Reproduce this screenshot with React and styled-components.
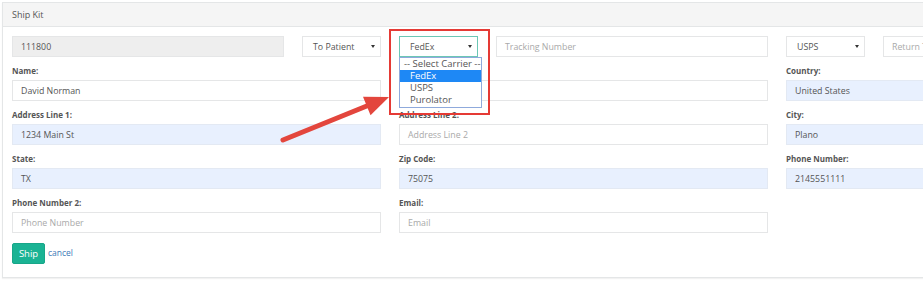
import React from "react";
import styled, { createGlobalStyle } from "styled-components";

const Global = createGlobalStyle`
  html, body { margin: 0; padding: 0; background: #fff; overflow: hidden; }
  body { font-family: "Open Sans", "Noto Sans", Arial, sans-serif; color: #676a6c; }
  * { box-sizing: border-box; }
`;

const Page = styled.div`
  position: relative;
  width: 923px;
  height: 286px;
  padding: 2px 0 0 2px;
  overflow: hidden;
`;

const Panel = styled.div`
  width: 1200px;
  border: 1px solid #e4e6e7;
  background: #fff;
  box-shadow: 0 1px 1px rgba(0,0,0,0.05);
`;

const Header = styled.div`
  height: 24px;
  background: #f5f5f5;
  border-bottom: 1px solid #e4e6e7;
  padding: 0 9px;
  display: flex;
  align-items: center;
  font-size: 9px;
  color: #555;
`;

const Body = styled.div`
  padding: 9px 9px 13px 9px;
`;

const Grid = styled.div`
  display: grid;
  grid-template-columns: repeat(3, 369px);
  column-gap: 18px;
  row-gap: 8px;
`;

const TopRow = styled.div`
  display: flex;
  gap: 18px;
`;

const Group = styled.div`
  display: flex;
  flex-direction: column;
`;

const Label = styled.div`
  font-size: 8px;
  font-weight: 700;
  color: #555;
  height: 13px;
  line-height: 12px;
  margin-bottom: 2px;
`;

const Field = styled.div`
  height: 21px;
  flex: 1 1 auto;
  border: 1px solid ${p => (p.$filled ? "#e3e9f3" : "#e5e6e7")};
  background: ${p => (p.$disabled ? "#eeeeee" : p.$filled ? "#e8f0fe" : "#fff")};
  padding: 0 8px;
  display: flex;
  align-items: center;
  font-size: 8.8px;
  color: ${p => (p.$ph ? "#a9a9a9" : "#555")};
  white-space: nowrap;
  overflow: hidden;
`;

const Select = styled.div`
  position: relative;
  height: 21px;
  flex: 0 0 79px;
  border: 1px solid ${p => (p.$focus ? "#6cc7b5" : "#e5e6e7")};
  background: #fff;
  padding: 0 5px 0 10px;
  display: flex;
  align-items: center;
  justify-content: space-between;
  font-size: 8.8px;
  color: #555;
`;

const Caret = styled.span`
  width: 0;
  height: 0;
  border-left: 2.5px solid transparent;
  border-right: 2.5px solid transparent;
  border-top: 3.5px solid #333;
`;

const DropList = styled.div`
  position: absolute;
  left: -1px;
  top: 20px;
  width: 83px;
  border: 1px solid #8faadc;
  background: #fff;
  z-index: 3;
  padding: 0 0 1px;
`;

const DropItem = styled.div`
  height: 12px;
  line-height: 12px;
  padding-left: ${p => (p.$first ? "4px" : "10px")};
  font-size: 9.5px;
  white-space: nowrap;
  background: ${p => (p.$active ? "#1e88f5" : "transparent")};
  color: ${p => (p.$active ? "#fff" : "#555")};
`;

const Actions = styled.div`
  display: flex;
  align-items: center;
  gap: 3px;
  margin-top: 10px;
`;

const ShipButton = styled.button`
  height: 21px;
  width: 33px;
  border: 1px solid #18a689;
  background: #1ab394;
  color: #fff;
  font-family: inherit;
  font-size: 9.5px;
  border-radius: 2px;
  padding: 0;
`;

const CancelLink = styled.a`
  font-size: 8.5px;
  color: #3c7bb8;
  text-decoration: none;
  margin-top: -2px;
`;

const Highlight = styled.div`
  position: absolute;
  left: 389px;
  top: 29px;
  width: 101px;
  height: 86px;
  border: 2px solid #e53a35;
  z-index: 2;
  pointer-events: none;
`;

const ArrowSvg = styled.svg`
  position: absolute;
  left: 276px;
  top: 88px;
  z-index: 4;
  overflow: visible;
`;

function Arrow() {
  // tail (283,140) -> tip (389,97)
  const x1 = 283 - 276, y1 = 140 - 88, x2 = 389 - 276, y2 = 97 - 88;
  const dx = x2 - x1, dy = y2 - y1;
  const len = Math.hypot(dx, dy);
  const ux = dx / len, uy = dy / len;
  const px = -uy, py = ux;
  const hl = 24, hw = 10;
  const bx = x2 - ux * hl, by = y2 - uy * hl;
  const head = `${x2},${y2} ${bx + px * hw},${by + py * hw} ${bx - px * hw},${by - py * hw}`;
  return (
    <ArrowSvg width="130" height="70" viewBox="0 0 130 70">
      <line x1={x1} y1={y1} x2={bx + ux * 2} y2={by + uy * 2} stroke="#e3463d" strokeWidth="5" strokeLinecap="round" />
      <polygon points={head} fill="#e3463d" />
    </ArrowSvg>
  );
}

export default function App() {
  return (
    <>
      <Global />
      <Page>
        <Panel>
          <Header>Ship Kit</Header>
          <Body>
            <Grid>
              <TopRow>
                <Field $disabled>111800</Field>
                <Select>To Patient<Caret /></Select>
              </TopRow>
              <TopRow>
                <Select $focus>
                  FedEx<Caret />
                  <DropList>
                    <DropItem $first>-- Select Carrier --</DropItem>
                    <DropItem $active>FedEx</DropItem>
                    <DropItem>USPS</DropItem>
                    <DropItem>Purolator</DropItem>
                  </DropList>
                </Select>
                <Field $ph>Tracking Number</Field>
              </TopRow>
              <TopRow>
                <Select>USPS<Caret /></Select>
                <Field $ph>Return Tracking Number</Field>
              </TopRow>

              <Group>
                <Label>Name:</Label>
                <Field>David Norman</Field>
              </Group>
              <Group>
                <Label>&nbsp;</Label>
                <Field />
              </Group>
              <Group>
                <Label>Country:</Label>
                <Field $filled>United States</Field>
              </Group>

              <Group>
                <Label>Address Line 1:</Label>
                <Field $filled>1234 Main St</Field>
              </Group>
              <Group>
                <Label>Address Line 2:</Label>
                <Field $ph>Address Line 2</Field>
              </Group>
              <Group>
                <Label>City:</Label>
                <Field $filled>Plano</Field>
              </Group>

              <Group>
                <Label>State:</Label>
                <Field $filled>TX</Field>
              </Group>
              <Group>
                <Label>Zip Code:</Label>
                <Field $filled>75075</Field>
              </Group>
              <Group>
                <Label>Phone Number:</Label>
                <Field $filled>2145551111</Field>
              </Group>

              <Group>
                <Label>Phone Number 2:</Label>
                <Field $ph>Phone Number</Field>
              </Group>
              <Group>
                <Label>Email:</Label>
                <Field $ph>Email</Field>
              </Group>
            </Grid>
            <Actions>
              <ShipButton>Ship</ShipButton>
              <CancelLink href="#">cancel</CancelLink>
            </Actions>
          </Body>
        </Panel>
        <Highlight />
        <Arrow />
      </Page>
    </>
  );
}
